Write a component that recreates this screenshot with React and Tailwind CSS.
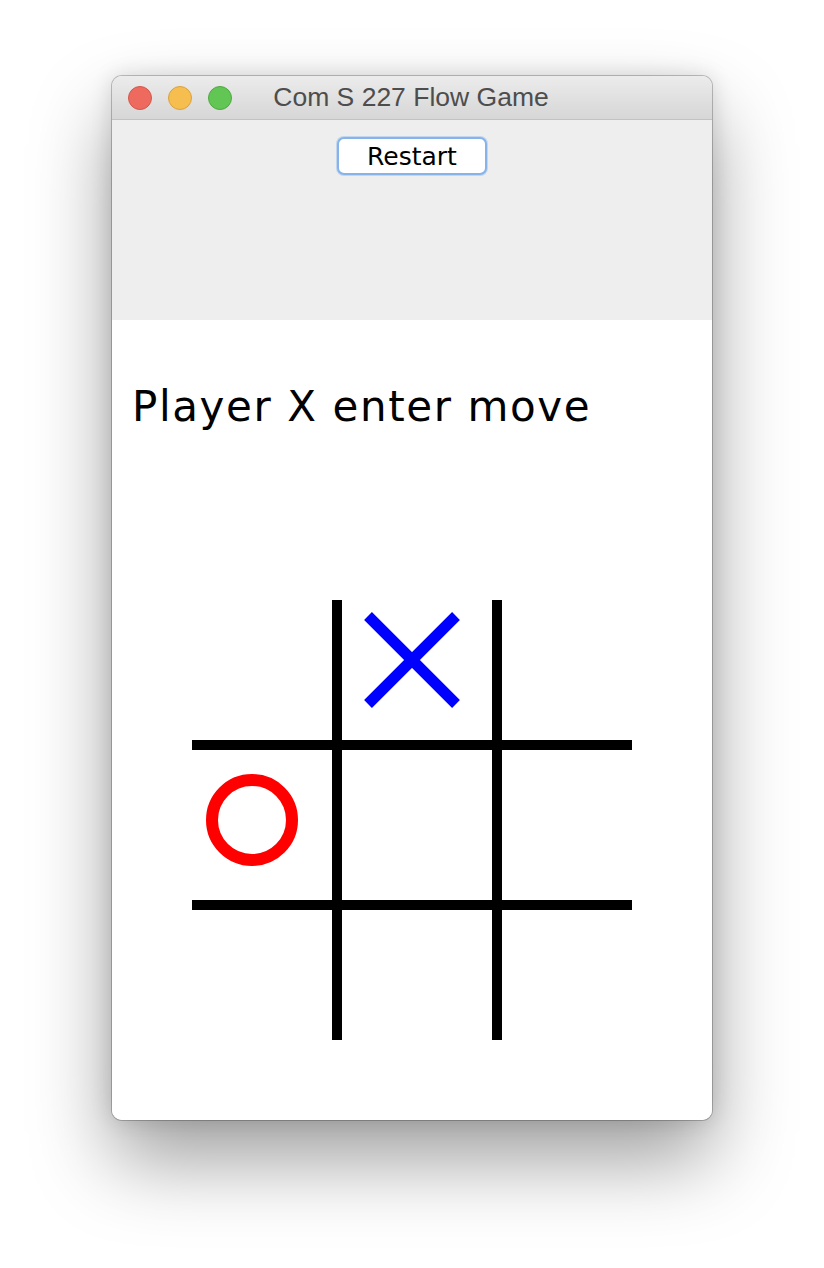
export default function App() {
  return (
    <div className="min-h-[1268px] w-full bg-white flex justify-center pt-[76px]">
      {/* WINDOW */}
      <div className="w-[600px] h-[1044px] rounded-[10px] overflow-hidden bg-white flex flex-col shadow-[0_40px_80px_rgba(0,0,0,0.38),0_0_22px_rgba(0,0,0,0.14),0_0_0_1px_rgba(0,0,0,0.22)]">
        {/* TITLE BAR */}
        <div className="relative h-[44px] shrink-0 flex items-center bg-gradient-to-b from-[#ececec] to-[#d6d6d6] border-b border-[#c2c2c2]">
          <div className="flex gap-[16px] pl-[16px]">
            <span className="w-[24px] h-[24px] rounded-full bg-[#ee6a5f] border border-[#d2574b]" />
            <span className="w-[24px] h-[24px] rounded-full bg-[#f6be4f] border border-[#d9a13f]" />
            <span className="w-[24px] h-[24px] rounded-full bg-[#62c655] border border-[#50a842]" />
          </div>
          <div className="absolute inset-0 flex items-center justify-center pr-[2px] text-[26.5px] text-[#4d4d4d] font-['Liberation_Sans',Arial,sans-serif] pointer-events-none">
            Com S 227 Flow Game
          </div>
        </div>

        {/* CONTROL PANEL */}
        <div className="h-[200px] shrink-0 bg-[#eeeeee] flex justify-center pt-[17px]">
          <button className="w-[150px] h-[38px] rounded-[7px] bg-white border-2 border-[#86b3ea] shadow-[0_0_0_1px_rgba(140,185,240,0.45)] text-[25px] leading-none text-black font-['DejaVu_Sans',sans-serif]">
            Restart
          </button>
        </div>

        {/* GAME AREA */}
        <div className="flex-1 bg-white flex flex-col">
          <div className="mt-[66px] pl-[20px] text-[42px] leading-none tracking-[1.6px] text-black font-['DejaVu_Sans',sans-serif]">
            Player X enter move
          </div>

          <div className="mt-[172px] ml-[80px]">
            <svg width="440" height="440" viewBox="0 0 440 440">
              {/* grid */}
              <rect x="140" y="0" width="10" height="440" fill="#000" />
              <rect x="300" y="0" width="10" height="440" fill="#000" />
              <rect x="0" y="140" width="440" height="10" fill="#000" />
              <rect x="0" y="300" width="440" height="10" fill="#000" />
              {/* X */}
              <line x1="176" y1="16" x2="264" y2="104" stroke="#0000ff" strokeWidth="11" />
              <line x1="264" y1="16" x2="176" y2="104" stroke="#0000ff" strokeWidth="11" />
              {/* O */}
              <circle cx="60" cy="220" r="40" fill="none" stroke="#ff0000" strokeWidth="12" />
            </svg>
          </div>
        </div>
      </div>
    </div>
  );
}
